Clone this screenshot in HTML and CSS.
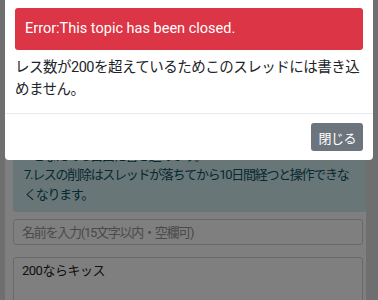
FILE: index.html
```html
<!DOCTYPE html>
<html lang="ja">
<head>
<meta charset="utf-8">
<title>スレッド</title>
<link rel="stylesheet" href="styles.css">
</head>
<body>
<div class="page">
  <div class="rules">
    <p class="rule">5.荒らし行為は禁止です。</p>
    <p class="rule">6.どなたでも自由に書き込めます。</p>
    <p class="rule">7.レスの削除はスレッドが落ちてから10日間経つと操作できなくなります。</p>
  </div>
  <form class="post-form">
    <input class="name-input" type="text" placeholder="名前を入力(15文字以内・空欄可)">
    <div class="message-input">200ならキッス</div>
  </form>
</div>

<div class="backdrop"></div>
<div class="modal">
  <div class="modal-body">
    <div class="alert-danger">Error:This topic has been closed.</div>
    <p class="modal-text">レス数が200を超えているためこのスレッドには書き込めません。</p>
  </div>
  <div class="modal-footer">
    <button class="btn-close" type="button">閉じる</button>
  </div>
</div>
</body>
</html>
```
FILE: styles.css
```css
html, body {
  margin: 0;
  padding: 0;
}
body {
  background: #dedede;
  font-family: Roboto, "Noto Sans CJK JP", sans-serif;
  color: #212529;
  height: 300px;
  overflow: hidden;
}
.page {
  margin-left: 5px;
  width: 353px;
  padding: 116px 0 0 8px;
  background: #ffffff;
  height: 184px;
}
.rules {
  background: #d1ecf1;
  color: #0c5460;
  border-radius: 3px;
  padding: 10px 10px 8px 11px;
  font-size: 13px;
  letter-spacing: -1.3px;
  line-height: 19.5px;
}
.rule {
  margin: 0;
}
.post-form {
  display: flex;
  flex-direction: column;
  gap: 12px;
  margin-top: 7px;
  width: 350px;
}
.name-input {
  height: 26px;
  box-sizing: border-box;
  border: 1px solid #ced4da;
  border-radius: 3px;
  padding: 0 8px;
  margin: 0;
  font-family: Roboto, "Noto Sans CJK JP", sans-serif;
  font-size: 13px;
  letter-spacing: -1.25px;
  background: #fff;
}
.name-input::placeholder {
  color: #949494;
}
.message-input {
  height: 80px;
  box-sizing: border-box;
  border: 1px solid #ced4da;
  border-radius: 3px;
  padding: 3px 8px;
  font-size: 13px;
  letter-spacing: -0.5px;
  line-height: 20px;
  color: #222;
  background: #fff;
}

.backdrop {
  position: fixed;
  inset: 0;
  background: rgba(0, 0, 0, 0.5);
}
.modal {
  position: fixed;
  top: 0;
  left: 5px;
  width: 368px;
  background: #ffffff;
  border-radius: 0 0 4px 4px;
}
.modal-body {
  padding: 8px 10px 12px 10px;
}
.alert-danger {
  height: 42px;
  line-height: 42px;
  padding: 0 10px;
  background: #dc3545;
  color: #ffffff;
  border-radius: 3px;
  font-size: 14.5px;
  margin-bottom: 7px;
}
.modal-text {
  margin: 0;
  font-size: 14.5px;
  line-height: 22px;
  letter-spacing: -0.5px;
  color: #212529;
}
.modal-footer {
  border-top: 1px solid #e9ecef;
  padding: 9px 10px;
  display: flex;
  justify-content: flex-end;
}
.btn-close {
  height: 28px;
  padding: 0 7px 0 7px;
  border: none;
  border-radius: 3px;
  background: #6c757d;
  color: #ffffff;
  font-family: Roboto, "Noto Sans CJK JP", sans-serif;
  font-size: 13px;
  letter-spacing: -0.5px;
}
```
